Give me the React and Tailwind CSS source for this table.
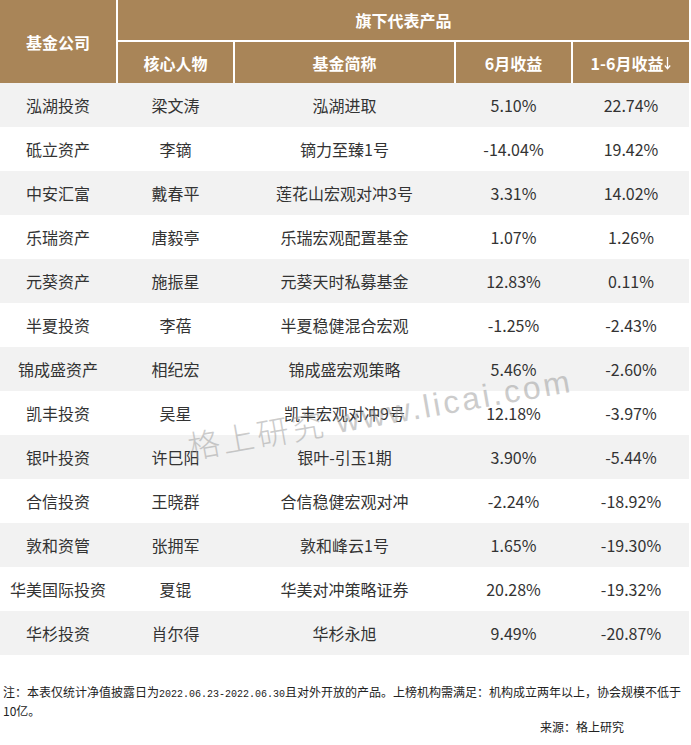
import React from "react";

const rows = [
  ["泓湖投资", "梁文涛", "泓湖进取", "5.10%", "22.74%"],
  ["砥立资产", "李镝", "镝力至臻1号", "-14.04%", "19.42%"],
  ["中安汇富", "戴春平", "莲花山宏观对冲3号", "3.31%", "14.02%"],
  ["乐瑞资产", "唐毅亭", "乐瑞宏观配置基金", "1.07%", "1.26%"],
  ["元葵资产", "施振星", "元葵天时私募基金", "12.83%", "0.11%"],
  ["半夏投资", "李蓓", "半夏稳健混合宏观", "-1.25%", "-2.43%"],
  ["锦成盛资产", "相纪宏", "锦成盛宏观策略", "5.46%", "-2.60%"],
  ["凯丰投资", "吴星", "凯丰宏观对冲9号", "12.18%", "-3.97%"],
  ["银叶投资", "许巳阳", "银叶-引玉1期", "3.90%", "-5.44%"],
  ["合信投资", "王晓群", "合信稳健宏观对冲", "-2.24%", "-18.92%"],
  ["敦和资管", "张拥军", "敦和峰云1号", "1.65%", "-19.30%"],
  ["华美国际投资", "夏锟", "华美对冲策略证券", "20.28%", "-19.32%"],
  ["华杉投资", "肖尔得", "华杉永旭", "9.49%", "-20.87%"],
];

const cols = "grid grid-cols-[116px_115px_219px_115px_116px] gap-x-[2px]";
const font = { fontFamily: '"Noto Sans CJK SC", "Noto Sans", sans-serif' };

export default function App() {
  return (
    <div className="relative w-[691px] h-[745px] bg-white overflow-hidden" style={font}>
      <div className="w-[689px]">
        {/* header */}
        <div className="grid grid-cols-[116px_115px_219px_115px_116px] grid-rows-[40px_41px] gap-[2px] bg-white text-white font-bold text-[16px]">
          <div className="row-span-2 bg-[#a98558] flex items-center justify-center">基金公司</div>
          <div className="col-span-4 bg-[#a98558] flex items-center justify-center">旗下代表产品</div>
          <div className="bg-[#a98558] flex items-center justify-center">核心人物</div>
          <div className="bg-[#a98558] flex items-center justify-center">基金简称</div>
          <div className="bg-[#a98558] flex items-center justify-center">6月收益</div>
          <div className="bg-[#a98558] flex items-center justify-center">
            1-6月收益
            <svg width="7" height="14" viewBox="0 0 7 14" className="ml-[1px]">
              <path d="M3.5 1 V12.5 M0.8 9.5 L3.5 12.8 L6.2 9.5" stroke="white" strokeWidth="1.3" fill="none" />
            </svg>
          </div>
        </div>
        {/* body */}
        {rows.map((r, i) => (
          <div key={i} className={(i % 2 === 0 ? "bg-[#f2f2f2] " : "bg-white ") + cols + " h-[44px] text-[16px] text-[#333333]"}>
            {r.map((c, j) => (
              <div key={j} className="flex items-center justify-center whitespace-nowrap">{c}</div>
            ))}
          </div>
        ))}
      </div>

      {/* footer */}
      <div className="pt-[29px] pl-[3px] text-[12px] leading-[16px] text-[#222222]">
        <div className="whitespace-nowrap">
          注：本表仅统计净值披露日为<span className="text-[10px]" style={{ fontFamily: '"Liberation Mono", monospace' }}>2022.06.23-2022.06.30</span>且对外开放的产品。上榜机构需满足：机构成立两年以上，协会规模不低于
        </div>
        <div>10亿。</div>
        <div className="pl-[537px]">来源：格上研究</div>
      </div>

      {/* watermark */}
      <div
        className="pointer-events-none absolute left-[380px] top-[413px] -translate-x-1/2 -translate-y-1/2 -rotate-[10deg] whitespace-nowrap text-[32px] font-light tracking-[3px] text-[#9a9a9a] opacity-50"
      >
        格上研究 <span style={{ fontFamily: '"Liberation Sans", Arial, sans-serif' }}>www.licai.com</span>
      </div>
    </div>
  );
}
